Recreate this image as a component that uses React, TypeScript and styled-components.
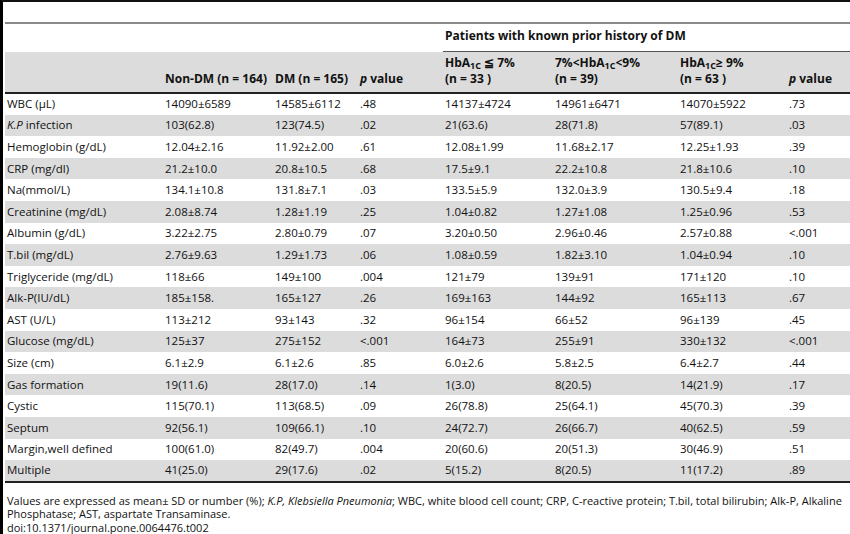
import styled, { createGlobalStyle } from "styled-components"

const GlobalStyle = createGlobalStyle`
    html, body {
        margin: 0;
        padding: 0;
        background: #ffffff;
    }
    body {
        font-family: "Open Sans", "Liberation Sans", sans-serif;
        color: #111;
    }
`

const Page = styled.div`
    width: 850px;
    height: 534px;
    box-sizing: border-box;
    border-left: 3px solid #000;
    border-top: 2px solid #111;
    overflow: hidden;
    padding-top: 20px;
`

const Table = styled.table`
    margin-left: 2px;
    width: 845px;
    border-collapse: collapse;
    table-layout: fixed;
    font-size: 11.5px;
    border-top: 2px solid #8a8a8a;
    border-bottom: 2px solid #222;
`

const GroupRow = styled.tr`
    height: 29px;
`

const GroupCell = styled.td`
    padding: 0;
    vertical-align: bottom;
`

const GroupTitle = styled.div`
    margin-left: 3px;
    padding: 0 0 7px 2px;
    font-size: 12px;
    line-height: 16px;
    font-weight: 700;
    border-bottom: 1px solid #555;
`

const HeadRow = styled.tr`
    background: #dcdcdc;
    height: 41px;
    border-bottom: 2px solid #222;
`

const Th = styled.th<{ $first?: boolean }>`
    text-align: left;
    vertical-align: bottom;
    font-size: 12px;
    font-weight: 700;
    line-height: 16px;
    padding: 0 0 5px ${(p) => (p.$first ? "2px" : "5px")};
    white-space: nowrap;
`

const Row = styled.tr<{ $shade: boolean }>`
    height: 21.6px;
    background: ${(p) => (p.$shade ? "#dcdcdc" : "#ffffff")};
`

const Td = styled.td<{ $first?: boolean }>`
    padding: 0 0 0 ${(p) => (p.$first ? "2px" : "5px")};
    white-space: nowrap;
    vertical-align: middle;
    line-height: 16px;
`

const Sub = styled.sub`
    font-size: 9px;
    vertical-align: -2px;
    line-height: 0;
`

const Footnote = styled.div`
    margin: 11px 0 0 4px;
    font-size: 11px;
    line-height: 13.5px;
    width: 843px;
`

const colWidths = [155, 110, 85, 85, 110, 125, 109, 66]

type DataRow = { label: React.ReactNode; values: string[] }

const rows: DataRow[] = [
    { label: "WBC (µL)", values: ["14090±6589", "14585±6112", ".48", "14137±4724", "14961±6471", "14070±5922", ".73"] },
    { label: <><i>K.P</i> infection</>, values: ["103(62.8)", "123(74.5)", ".02", "21(63.6)", "28(71.8)", "57(89.1)", ".03"] },
    { label: "Hemoglobin (g/dL)", values: ["12.04±2.16", "11.92±2.00", ".61", "12.08±1.99", "11.68±2.17", "12.25±1.93", ".39"] },
    { label: "CRP (mg/dl)", values: ["21.2±10.0", "20.8±10.5", ".68", "17.5±9.1", "22.2±10.8", "21.8±10.6", ".10"] },
    { label: "Na(mmol/L)", values: ["134.1±10.8", "131.8±7.1", ".03", "133.5±5.9", "132.0±3.9", "130.5±9.4", ".18"] },
    { label: "Creatinine (mg/dL)", values: ["2.08±8.74", "1.28±1.19", ".25", "1.04±0.82", "1.27±1.08", "1.25±0.96", ".53"] },
    { label: "Albumin (g/dL)", values: ["3.22±2.75", "2.80±0.79", ".07", "3.20±0.50", "2.96±0.46", "2.57±0.88", "<.001"] },
    { label: "T.bil (mg/dL)", values: ["2.76±9.63", "1.29±1.73", ".06", "1.08±0.59", "1.82±3.10", "1.04±0.94", ".10"] },
    { label: "Triglyceride (mg/dL)", values: ["118±66", "149±100", ".004", "121±79", "139±91", "171±120", ".10"] },
    { label: "Alk-P(IU/dL)", values: ["185±158.", "165±127", ".26", "169±163", "144±92", "165±113", ".67"] },
    { label: "AST (U/L)", values: ["113±212", "93±143", ".32", "96±154", "66±52", "96±139", ".45"] },
    { label: "Glucose (mg/dL)", values: ["125±37", "275±152", "<.001", "164±73", "255±91", "330±132", "<.001"] },
    { label: "Size (cm)", values: ["6.1±2.9", "6.1±2.6", ".85", "6.0±2.6", "5.8±2.5", "6.4±2.7", ".44"] },
    { label: "Gas formation", values: ["19(11.6)", "28(17.0)", ".14", "1(3.0)", "8(20.5)", "14(21.9)", ".17"] },
    { label: "Cystic", values: ["115(70.1)", "113(68.5)", ".09", "26(78.8)", "25(64.1)", "45(70.3)", ".39"] },
    { label: "Septum", values: ["92(56.1)", "109(66.1)", ".10", "24(72.7)", "26(66.7)", "40(62.5)", ".59"] },
    { label: "Margin,well defined", values: ["100(61.0)", "82(49.7)", ".004", "20(60.6)", "20(51.3)", "30(46.9)", ".51"] },
    { label: "Multiple", values: ["41(25.0)", "29(17.6)", ".02", "5(15.2)", "8(20.5)", "11(17.2)", ".89"] },
]

export default function App() {
    return (
        <>
            <GlobalStyle />
            <Page>
                <Table>
                    <colgroup>
                        {colWidths.map((w, i) => (
                            <col key={i} style={{ width: w }} />
                        ))}
                    </colgroup>
                    <thead>
                        <GroupRow>
                            <GroupCell colSpan={4} />
                            <GroupCell colSpan={4}>
                                <GroupTitle>Patients with known prior history of DM</GroupTitle>
                            </GroupCell>
                        </GroupRow>
                        <HeadRow>
                            <Th $first />
                            <Th>Non-DM (n = 164)</Th>
                            <Th>DM (n = 165)</Th>
                            <Th><i>p</i> value</Th>
                            <Th>HbA<Sub>1C</Sub> ≦ 7%<br />(n = 33 )</Th>
                            <Th>7%&lt;HbA<Sub>1C</Sub>&lt;9%<br />(n = 39)</Th>
                            <Th>HbA<Sub>1C</Sub>≥ 9%<br />(n = 63 )</Th>
                            <Th><i>p</i> value</Th>
                        </HeadRow>
                    </thead>
                    <tbody>
                        {rows.map((r, i) => (
                            <Row key={i} $shade={i % 2 === 1}>
                                <Td $first>{r.label}</Td>
                                {r.values.map((v, j) => (
                                    <Td key={j}>{v}</Td>
                                ))}
                            </Row>
                        ))}
                    </tbody>
                </Table>
                <Footnote>
                    Values are expressed as mean± SD or number (%); <i>K.P, Klebsiella Pneumonia</i>; WBC, white blood cell count; CRP, C-reactive protein; T.bil, total bilirubin; Alk-P, Alkaline Phosphatase; AST, aspartate Transaminase.
                    <br />
                    doi:10.1371/journal.pone.0064476.t002
                </Footnote>
            </Page>
        </>
    )
}
